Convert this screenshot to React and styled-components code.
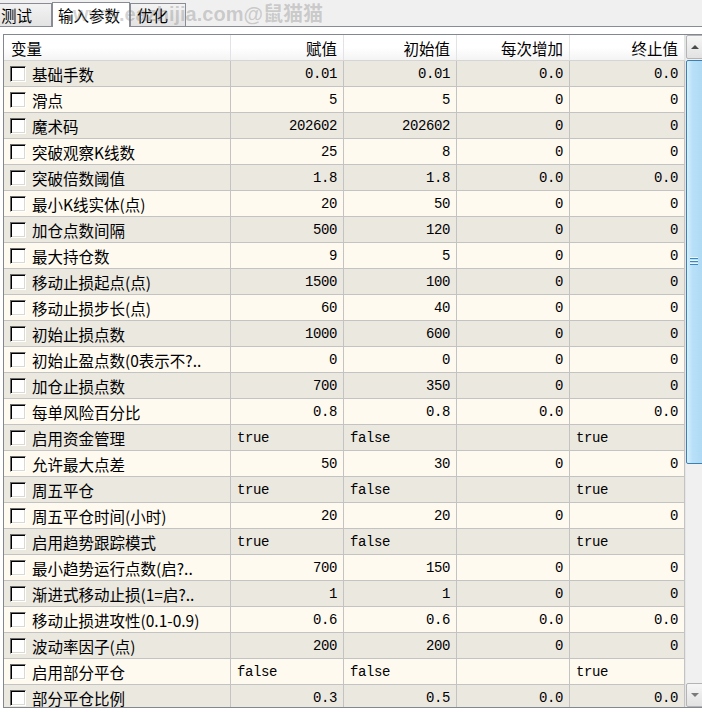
import React from "react";
import styled, { createGlobalStyle } from "styled-components";

const GlobalStyle = createGlobalStyle`
  html, body {
    margin: 0;
    padding: 0;
    background: #ffffff;
    overflow: hidden;
  }
  body {
    font-family: "Noto Sans CJK SC", "Liberation Sans", sans-serif;
    color: #000;
  }
`;

const COLS = "227px 113px 113px 113px 115px";

const Window = styled.div`
  position: relative;
  width: 702px;
  height: 712px;
  overflow: hidden;
  background: #ffffff;
`;

const TabBar = styled.div`
  height: 27px;
  box-sizing: border-box;
  background: #f0f0f0;
  border-bottom: 1px solid #898c95;
  display: flex;
  align-items: flex-end;
  margin-left: -7px;
`;

const Tab = styled.div`
  box-sizing: border-box;
  width: ${p => p.width}px;
  height: ${p => (p.active ? 25 : 23)}px;
  margin-bottom: ${p => (p.active ? -1 : 0)}px;
  padding-left: ${p => p.pad}px;
  border: 1px solid #898c95;
  border-bottom: none;
  background: ${p => (p.active ? "#ffffff" : "linear-gradient(#f3f3f3, #e3e3e3)")};
  font-size: 15.5px;
  line-height: ${p => (p.active ? 24 : 22)}px;
  white-space: nowrap;
  position: relative;
  z-index: ${p => (p.active ? 1 : 0)};
`;

const Watermark = styled.span`
  position: absolute;
  left: 73px;
  top: 2px;
  font-family: "Liberation Sans", "Noto Sans CJK SC", sans-serif;
  font-weight: bold;
  font-size: 20px;
  line-height: 24px;
  color: rgba(120, 120, 120, 0.32);
  white-space: nowrap;
  z-index: 3;
  pointer-events: none;
`;

const Panel = styled.div`
  padding: 7px 0 0 3px;
`;

const Grid = styled.div`
  box-sizing: border-box;
  width: 702px;
  height: 674px;
  border: 1px solid #828790;
  display: flex;
  overflow: hidden;
  background: #ffffff;
`;

const Table = styled.div`
  flex: none;
  width: 681px;
  display: flex;
  flex-direction: column;
  overflow: hidden;
`;

const HeaderRow = styled.div`
  flex: none;
  display: grid;
  grid-template-columns: ${COLS};
  height: 26px;
  box-sizing: border-box;
  border-bottom: 1px solid #d5d5d5;
  background: linear-gradient(#ffffff, #ffffff 50%, #f4f4f4);
`;

const HeaderCell = styled.div`
  border-right: 1px solid #e2e3e5;
  padding: 1px ${p => (p.left ? 0 : 6)}px 0 ${p => (p.left ? 7 : 0)}px;
  text-align: ${p => (p.left ? "left" : "right")};
  font-size: 15.5px;
  line-height: 24px;
  white-space: nowrap;
`;

const Row = styled.div`
  flex: none;
  display: grid;
  grid-template-columns: ${COLS};
  height: 26px;
  box-sizing: border-box;
  border-bottom: 1px solid #c3c3c3;
  background: ${p => (p.odd ? "#ebe8e0" : "#fefaf0")};
`;

const NameCell = styled.div`
  display: flex;
  align-items: center;
  gap: 6px;
  padding: 1px 0 0 6px;
  border-right: 1px solid #c3c3c3;
  font-size: 15.5px;
  white-space: nowrap;
  overflow: hidden;
`;

const Checkbox = styled.span`
  flex: none;
  width: 16px;
  height: 16px;
  margin-top: -1px;
  box-sizing: border-box;
  background: #ffffff;
  border: 1px solid;
  border-color: #6a6a6a #ffffff #ffffff #6a6a6a;
  box-shadow: inset 1px 1px 0 #000000, inset -1px -1px 0 #dcd9d0;
`;

const ValueCell = styled.div`
  border-right: 1px solid #c3c3c3;
  padding: ${p => (p.text ? "1px 0 0 6px" : "1px 6px 0 0")};
  text-align: ${p => (p.text ? "left" : "right")};
  font-family: "Liberation Mono", "DejaVu Sans Mono", monospace;
  font-size: 14px;
  letter-spacing: -0.4px;
  line-height: 24px;
  white-space: nowrap;
`;

const ScrollBar = styled.div`
  flex: none;
  width: 20px;
  display: flex;
  flex-direction: column;
  background: #f0f0f0;
  border-left: 1px solid #e6e6e6;
`;

const ArrowButton = styled.div`
  flex: none;
  height: 24px;
  box-sizing: border-box;
  border: 1px solid #b4b4b4;
  border-radius: 2px;
  background: linear-gradient(#f6f6f6, #e2e2e2);
  display: flex;
  align-items: center;
  justify-content: center;
  padding-right: 3px;
`;

const Arrow = styled.span`
  width: 0;
  height: 0;
  border-left: 4px solid transparent;
  border-right: 4px solid transparent;
  ${p => (p.down ? "border-top: 4px solid #7a7a7a;" : "border-bottom: 4px solid #4a4a4a;")}
`;

const Thumb = styled.div`
  flex: none;
  height: 404px;
  margin-top: 1px;
  box-sizing: border-box;
  border: 1px solid #3c7fb1;
  border-radius: 2px;
  background: linear-gradient(to right, #d8f0fd, #b8e0f8 30%, #acd8f4);
  display: flex;
  align-items: center;
  padding-left: 3px;
`;

const Track = styled.div`
  flex: 1;
`;

const rows = [
  ["基础手数", "0.01", "0.01", "0.0", "0.0"],
  ["滑点", "5", "5", "0", "0"],
  ["魔术码", "202602", "202602", "0", "0"],
  ["突破观察K线数", "25", "8", "0", "0"],
  ["突破倍数阈值", "1.8", "1.8", "0.0", "0.0"],
  ["最小K线实体(点)", "20", "50", "0", "0"],
  ["加仓点数间隔", "500", "120", "0", "0"],
  ["最大持仓数", "9", "5", "0", "0"],
  ["移动止损起点(点)", "1500", "100", "0", "0"],
  ["移动止损步长(点)", "60", "40", "0", "0"],
  ["初始止损点数", "1000", "600", "0", "0"],
  ["初始止盈点数(0表示不?..", "0", "0", "0", "0"],
  ["加仓止损点数", "700", "350", "0", "0"],
  ["每单风险百分比", "0.8", "0.8", "0.0", "0.0"],
  ["启用资金管理", "true", "false", "", "true"],
  ["允许最大点差", "50", "30", "0", "0"],
  ["周五平仓", "true", "false", "", "true"],
  ["周五平仓时间(小时)", "20", "20", "0", "0"],
  ["启用趋势跟踪模式", "true", "false", "", "true"],
  ["最小趋势运行点数(启?..", "700", "150", "0", "0"],
  ["渐进式移动止损(1=启?..", "1", "1", "0", "0"],
  ["移动止损进攻性(0.1-0.9)", "0.6", "0.6", "0.0", "0.0"],
  ["波动率因子(点)", "200", "200", "0", "0"],
  ["启用部分平仓", "false", "false", "", "true"],
  ["部分平仓比例", "0.3", "0.5", "0.0", "0.0"],
];

const isText = v => v === "true" || v === "false";

const Grip = () => (
  <svg width="9" height="10" viewBox="0 0 9 10">
    {[1, 4, 7].map(y => (
      <g key={y}>
        <rect x="0" y={y - 1} width="8" height="1" fill="#e8f6fe" />
        <rect x="0" y={y} width="8" height="1" fill="#3f86bd" />
      </g>
    ))}
  </svg>
);

export default function App() {
  return (
    <Window>
      <GlobalStyle />
      <TabBar>
        <Tab width={59} pad={7}>测试</Tab>
        <Tab width={78} pad={5} active>输入参数</Tab>
        <Tab width={56} pad={6}>优化</Tab>
      </TabBar>
      <Watermark>www.eazhijia.com@鼠猫猫</Watermark>
      <Panel>
        <Grid>
          <Table>
            <HeaderRow>
              <HeaderCell left>变量</HeaderCell>
              <HeaderCell>赋值</HeaderCell>
              <HeaderCell>初始值</HeaderCell>
              <HeaderCell>每次增加</HeaderCell>
              <HeaderCell>终止值</HeaderCell>
            </HeaderRow>
            {rows.map(([name, ...values], i) => (
              <Row key={name} odd={i % 2 === 0}>
                <NameCell>
                  <Checkbox />
                  {name}
                </NameCell>
                {values.map((v, j) => (
                  <ValueCell key={j} text={isText(v)}>
                    {v}
                  </ValueCell>
                ))}
              </Row>
            ))}
          </Table>
          <ScrollBar>
            <ArrowButton>
              <Arrow />
            </ArrowButton>
            <Thumb>
              <Grip />
            </Thumb>
            <Track />
            <ArrowButton>
              <Arrow down />
            </ArrowButton>
          </ScrollBar>
        </Grid>
      </Panel>
    </Window>
  );
}
